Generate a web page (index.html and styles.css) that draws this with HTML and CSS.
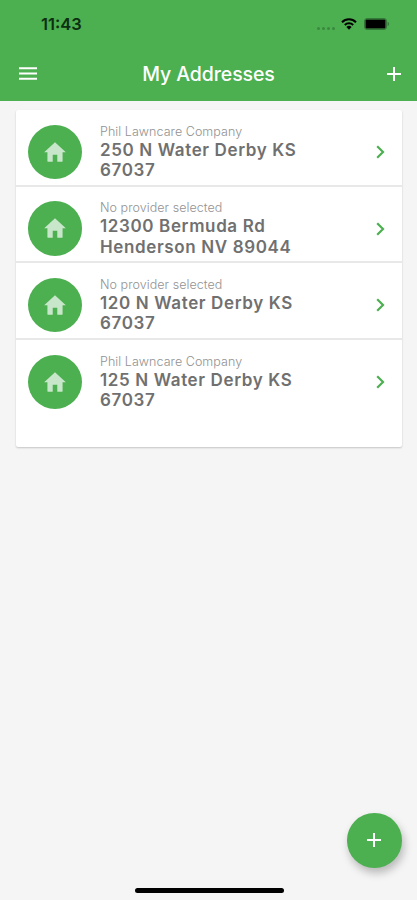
FILE: index.html
```
<!DOCTYPE html>
<html lang="en">
<head>
  <meta charset="UTF-8" />
  <meta name="viewport" content="width=device-width, initial-scale=1.0"/>
  <title>My Addresses</title>
  <link rel="stylesheet" href="styles.css">
</head>
<body>

  <svg class="sprite" width="0" height="0">
    <symbol id="home" viewBox="0 0 24 24">
      <path d="M12 3 22 12.2h-3V20.3a.8.8 0 0 1-.8.8h-4.1v-6.6H9.9v6.6H5.8a.8.8 0 0 1-.8-.8v-8.1H2z"/>
    </symbol>
    <symbol id="chevron" viewBox="0 0 9 14">
      <path d="M1.2 1.2 7 7l-5.8 5.8"/>
    </symbol>
    <symbol id="plus" viewBox="0 0 14 14">
      <path d="M7 0v14M0 7h14"/>
    </symbol>
  </svg>

  <header>
    <div class="status-bar">
      <span class="time">11:43</span>
      <div class="status-icons">
        <div class="signal"><i></i><i></i><i></i><i></i></div>
        <svg class="wifi" viewBox="0 0 16 12">
          <path class="arc" d="M1 4.2a10 10 0 0 1 14 0M3.8 7a6 6 0 0 1 8.4 0"/>
          <path d="M8 11.8 5.4 9.1a3.7 3.7 0 0 1 5.2 0z"/>
        </svg>
        <svg class="battery" viewBox="0 0 26 12">
          <rect class="shell" x=".5" y=".5" width="22" height="11" rx="2.5"/>
          <rect x="1.5" y="1.5" width="20" height="9" rx="1"/>
          <path class="cap" d="M23.6 3.8a2.4 2.4 0 0 1 0 4.4z"/>
        </svg>
      </div>
    </div>
    <nav>
      <a class="menu" href="#" aria-label="Menu">
        <svg viewBox="0 0 18 13"><path d="M0 1.2h18M0 6.5h18M0 11.8h18"/></svg>
      </a>
      <h1>My Addresses</h1>
      <a class="add" href="#" aria-label="Add"><svg><use href="#plus"/></svg></a>
    </nav>
  </header>

  <main class="address-list">
    <a class="address" href="#">
      <span class="avatar"><svg><use href="#home"/></svg></span>
      <div class="info">
        <p>Phil Lawncare Company</p>
        <h2>250 N Water Derby KS<br>67037</h2>
      </div>
      <svg class="chevron"><use href="#chevron"/></svg>
    </a>
    <a class="address" href="#">
      <span class="avatar"><svg><use href="#home"/></svg></span>
      <div class="info">
        <p>No provider selected</p>
        <h2>12300 Bermuda Rd<br>Henderson NV 89044</h2>
      </div>
      <svg class="chevron"><use href="#chevron"/></svg>
    </a>
    <a class="address" href="#">
      <span class="avatar"><svg><use href="#home"/></svg></span>
      <div class="info">
        <p>No provider selected</p>
        <h2>120 N Water Derby KS<br>67037</h2>
      </div>
      <svg class="chevron"><use href="#chevron"/></svg>
    </a>
    <a class="address" href="#">
      <span class="avatar"><svg><use href="#home"/></svg></span>
      <div class="info">
        <p>Phil Lawncare Company</p>
        <h2>125 N Water Derby KS<br>67037</h2>
      </div>
      <svg class="chevron"><use href="#chevron"/></svg>
    </a>
  </main>

  <button class="fab" aria-label="Add address"><svg><use href="#plus"/></svg></button>
  <div class="home-indicator"></div>

</body>
</html>
```
FILE: styles.css
```
* {
  box-sizing: border-box;
}
body {
  margin: 0;
  height: 900px;
  overflow: hidden;
  font-family: Inter, "Liberation Sans", sans-serif;
  background-color: #f5f5f5;
}
a {
  color: inherit;
  text-decoration: none;
}
svg {
  display: block;
}
.sprite {
  position: absolute;
}
header {
  height: 100.5px;
  background-color: #4caf50;
}
.status-bar {
  height: 48px;
  padding: 0 27px 0 41px;
  display: flex;
  justify-content: space-between;
  align-items: center;
}
.time {
  font-size: 16.5px;
  font-weight: 600;
  color: #0d2e10;
}
.status-icons {
  display: flex;
  align-items: center;
}
.signal {
  display: flex;
  gap: 2px;
  margin: 8px 6px 0 0;
}
.signal i {
  width: 3px;
  height: 3px;
  border-radius: 50%;
  background-color: #3b893e;
}
.wifi {
  width: 16px;
  height: 12px;
  margin-right: 7px;
}
.wifi .arc {
  fill: none;
  stroke: #000;
  stroke-width: 2;
}
.battery {
  width: 26px;
  height: 12px;
}
.battery .shell {
  fill: none;
  stroke: #34783a;
}
.battery .cap {
  fill: #34783a;
}
nav {
  height: 51px;
  padding: 0 16px 0 19px;
  display: grid;
  grid-template-columns: 18px 1fr 18px;
  align-items: center;
  color: white;
}
nav svg {
  fill: none;
  stroke: white;
  stroke-width: 2;
}
nav h1 {
  margin: 0;
  padding-right: 3px;
  font-size: 19.5px;
  font-weight: 500;
  letter-spacing: -0.1px;
  text-align: center;
}
.menu svg {
  width: 18px;
  height: 13px;
}
.add svg {
  width: 14px;
  height: 14px;
  margin-left: auto;
}
.address-list {
  margin: 9.5px 15px 0 16px;
  height: 337px;
  background-color: white;
  border-radius: 2px;
  box-shadow: 0 1px 2px rgba(0,0,0,0.2);
}
.address {
  height: 76.7px;
  padding: 14.5px 17px 0 11.5px;
  display: flex;
  align-items: flex-start;
  border-bottom: 2px solid #e8e8e8;
}
.address:last-child {
  border-bottom: none;
}
.avatar {
  width: 54.5px;
  height: 54.5px;
  border-radius: 50%;
  background-color: #4caf50;
  display: flex;
  justify-content: center;
  align-items: center;
}
.avatar svg {
  width: 26px;
  height: 26px;
  fill: #c8e6c9;
}
.info {
  flex: 1;
  margin-left: 18px;
}
.info p {
  margin: -1px 0 1px;
  font-size: 12.5px;
  font-weight: 300;
  line-height: 15px;
  letter-spacing: 0.05px;
  color: #929292;
}
.info h2 {
  margin: 0;
  font-size: 17px;
  font-weight: 600;
  line-height: 20.5px;
  letter-spacing: 0.63px;
  color: #707070;
}
.chevron {
  width: 9px;
  height: 14px;
  margin-top: 20.5px;
  fill: none;
  stroke: #4caf50;
  stroke-width: 2.2;
}
.fab {
  position: fixed;
  right: 15.5px;
  bottom: 32.5px;
  width: 54.5px;
  height: 54.5px;
  padding: 0;
  border: none;
  border-radius: 50%;
  background-color: #4caf50;
  box-shadow: 2px 5px 8px rgba(0,0,0,0.25);
  display: flex;
  justify-content: center;
  align-items: center;
}
.fab svg {
  width: 14px;
  height: 14px;
  stroke: white;
  stroke-width: 2;
}
.home-indicator {
  position: fixed;
  left: 134.5px;
  bottom: 7.5px;
  width: 149px;
  height: 4.5px;
  border-radius: 3px;
  background-color: #000;
}
```
